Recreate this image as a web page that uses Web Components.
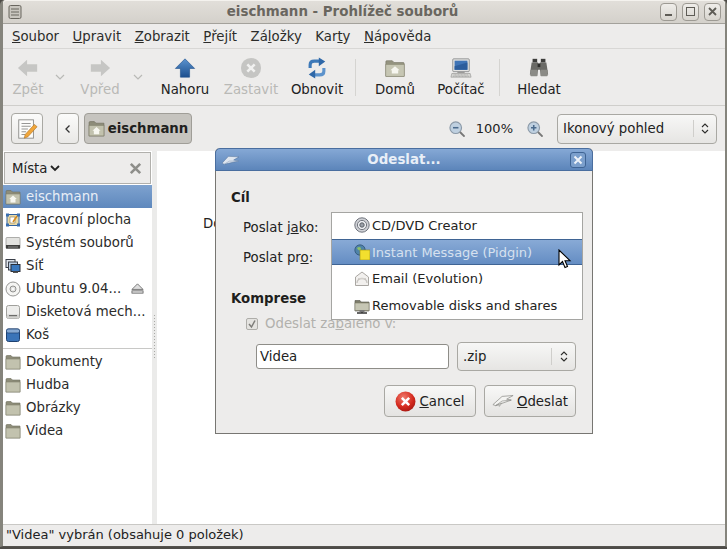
<!DOCTYPE html>
<html>
<head>
<meta charset="utf-8">
<style>
  html, body { margin: 0; height: 100%; background: #4d4b47; overflow: hidden; }
  body { font: 13.3px "DejaVu Sans", sans-serif; color: #222; }
</style>
</head>
<body>
<file-window>
  <title-bar slot="top">eischmann - Prohlížeč souborů</title-bar>
  <menu-bar slot="top">
    <menu-item><u>S</u>oubor</menu-item>
    <menu-item><u>U</u>pravit</menu-item>
    <menu-item><u>Z</u>obrazit</menu-item>
    <menu-item><u>P</u>řejít</menu-item>
    <menu-item>Zá<u>l</u>ožky</menu-item>
    <menu-item>Kar<u>t</u>y</menu-item>
    <menu-item><u>N</u>ápověda</menu-item>
  </menu-bar>
  <tool-bar slot="top"></tool-bar>
  <location-bar slot="top"></location-bar>
  <side-pane slot="side"></side-pane>
  <span slot="main" style="position:absolute;left:46px;top:65px">Do</span>
  <status-bar slot="bottom">"Videa" vybrán (obsahuje 0 položek)</status-bar>
  <send-dialog slot="over"></send-dialog>
</file-window>

<script>
const ICONS = {
  back: `<path d="M1 12 11 3v5h11v8H11v5z" fill="#c6c6c4"/>`,
  forward: `<path d="M23 12 13 3v5H2v8h11v5z" fill="#c6c6c4"/>`,
  up: `<defs><linearGradient id="g" x1="0" y1="0" x2="0" y2="1"><stop offset="0" stop-color="#5b93cf"/><stop offset="1" stop-color="#1c4f8e"/></linearGradient></defs><path d="M12 2 22.500 12.500H17V22H7v-9.500H1.500z" fill="url(#g)" stroke="#24558f" stroke-width=".7"/>`,
  stop: `<circle cx="12" cy="12" r="11" fill="#c5c5c3"/><path d="m8 8 8 8m0-8-8 8" stroke="#f1f1f0" stroke-width="2.800"/>`,
  reload: `<path d="M4.500 12V8.500Q4.500 4.500 9 4.500h6" fill="none" stroke="#3d79b8" stroke-width="3.400"/><path d="M14 .5 21 5l-7 5z" fill="#2f68a8"/><path d="M19.500 12v3.500q0 4-4.500 4H9" fill="none" stroke="#5d93cc" stroke-width="3.400"/><path d="m10 14-7 5 7 4.500z" fill="#2f68a8"/>`,
  home: `<path d="M2 5a1 1 0 0 1 1-1h6l2 2h10a1 1 0 0 1 1 1v14H2z" fill="#94937f" stroke="#6f6e5e" stroke-width=".6"/><rect x="2" y="8" width="20" height="13" fill="#c6c6b3" stroke="#85846f" stroke-width=".6"/><path d="m12 10 5 4.500h-1.500V18h-7v-3.500H7z" fill="#f6f6ef"/>`,
  computer: `<rect x="3" y="2" width="18" height="14" rx="1" fill="#e4e4e2" stroke="#77787a" stroke-width=".8"/><rect x="5" y="4" width="14" height="10" fill="#3f74b6"/><path d="M5 10 19 6v8H5z" fill="#2c5d9c"/><rect x="8" y="16" width="8" height="1.500" fill="#9a9a98"/><path d="M2 18h20l1 4H1z" fill="#d6d6d3" stroke="#8a8a88" stroke-width=".6"/><path d="M4 19.500h16M3.500 21h17" stroke="#8c8c8a" stroke-width=".6" stroke-dasharray="1 .6"/>`,
  search: `<rect x="5" y="2" width="5" height="4" fill="#3d3d3b"/><rect x="14" y="2" width="5" height="4" fill="#3d3d3b"/><path d="M4 6h7v5h2V6h7l2 13h-8l-1-5h-2l-1 5H2z" fill="#6a6a66"/><rect x="2.500" y="14" width="8" height="7" rx="1" fill="#8b8b86"/><rect x="13.500" y="14" width="8" height="7" rx="1" fill="#8b8b86"/><rect x="10.500" y="7" width="3" height="4" fill="#2d2d2b"/>`,
  note: `<rect x="3" y="2" width="16" height="20" fill="#fdfdfb" stroke="#8d8d8a"/><path d="M6 6h10M6 9h10M6 12h7M6 15h5M6 18h4" stroke="#8d8d8a"/><path d="m20 7 3 2.500-10 11-4 1.500 1-4z" fill="#f0a63a" stroke="#a7691a" stroke-width=".6"/>`,
  zoomout: `<circle cx="10" cy="10" r="7.500" fill="#bfd0e0" stroke="#8c9aa8" stroke-width="1.500"/><path d="M6.500 10h7" stroke="#4a6a8c" stroke-width="2"/><path d="m15.500 15.500 6 6" stroke="#777" stroke-width="2.500"/>`,
  zoomin: `<circle cx="10" cy="10" r="7.500" fill="#bfd0e0" stroke="#8c9aa8" stroke-width="1.500"/><path d="M6.500 10h7M10 6.500v7" stroke="#4a6a8c" stroke-width="2"/><path d="m15.500 15.500 6 6" stroke="#777" stroke-width="2.500"/>`,
  folder: `<path d="M1 2.500a1 1 0 0 1 1-1h4L7.500 3H15v12H1z" fill="#8e8d79" stroke="#6f6e5e" stroke-width=".6"/><rect x="1" y="5" width="14" height="10" fill="#c2c2ae" stroke="#83826e" stroke-width=".6"/>`,
  homefolder: `<path d="M1 2.500a1 1 0 0 1 1-1h4L7.500 3H15v12H1z" fill="#8e8d79" stroke="#6f6e5e" stroke-width=".6"/><rect x="1" y="5" width="14" height="10" fill="#c2c2ae" stroke="#83826e" stroke-width=".6"/><path d="m8 6.500 3.800 3.500h-1.300v3.500h-5V10H4.200z" fill="#f7f7f0"/>`,
  desktop: `<rect x="2" y="2.500" width="12" height="11" fill="#e9d9a6" stroke="#2f62a0"/><path d="M5 5h5v6H5z" fill="#fff" stroke="#8a7a50" stroke-width=".6"/><path d="m12 4-4 6" stroke="#d68a1e" stroke-width="1.600"/><rect x="1" y="1.500" width="3" height="3" fill="#3a6fb0"/><rect x="12" y="1.500" width="3" height="3" fill="#3a6fb0"/><rect x="1" y="11.500" width="3" height="3" fill="#3a6fb0"/><rect x="12" y="11.500" width="3" height="3" fill="#3a6fb0"/>`,
  drive: `<rect x="1" y="2.500" width="14" height="11" rx="1" fill="#e3e3e0" stroke="#8f8f8c" stroke-width=".7"/><rect x="1" y="10" width="14" height="3.500" fill="#3f3f3d"/><rect x="3" y="11.500" width="10" height="1" fill="#8c8c8a"/>`,
  network: `<rect x="1" y="1.500" width="9" height="8" fill="#dfe5ec" stroke="#3a3f48"/><rect x="3.500" y="4" width="9" height="8" fill="#bcd0e6" stroke="#3a3f48"/><rect x="6" y="6.500" width="9" height="7" fill="#3a78bd" stroke="#2a2f38"/><rect x="8" y="13.500" width="5" height="1.500" fill="#555"/>`,
  disc: `<circle cx="8" cy="8" r="7" fill="#f5f5f3" stroke="#7c7c7a" stroke-width=".8"/><circle cx="8" cy="8" r="3" fill="#e4e4e2" stroke="#7c7c7a" stroke-width=".8"/><circle cx="8" cy="8" r="1" fill="#fff"/>`,
  eject: `<path d="M7 2 1 8h12z" fill="#dedede" stroke="#555" stroke-width=".8"/><rect x="1" y="9.500" width="12" height="2.500" fill="#dedede" stroke="#555" stroke-width=".8"/>`,
  floppy: `<rect x="1.500" y="1.500" width="13" height="13" rx="2" fill="#ededeb" stroke="#a0a09c"/><path d="M2 10.500h12v3a1 1 0 0 1-1 1H3a1 1 0 0 1-1-1z" fill="#d2d2cf"/><rect x="4" y="11" width="8" height="1.200" fill="#6c6c6a"/>`,
  trash: `<rect x="1.500" y="2" width="13" height="12.500" rx="2" fill="#3a74b8" stroke="#1e4170"/><rect x="1.500" y="2" width="13" height="4" rx="1.500" fill="#86a9d2" stroke="#1e4170" stroke-width=".7"/>`,
  close: `<path d="m3 3 10 10M13 3 3 13" stroke="#8e8e8a" stroke-width="2.800"/>`,
  cd: `<circle cx="8" cy="8" r="7.200" fill="#cfd1d6" stroke="#6f737c"/><circle cx="8" cy="8" r="4.600" fill="#eef0f3" stroke="#73777f"/><circle cx="8" cy="8" r="2.200" fill="#9aa0a8" stroke="#5c6068"/>`,
  pidgin: `<circle cx="6" cy="6" r="5.200" fill="#4f83a8" stroke="#1f3f5f" stroke-width=".6"/><path d="M3 4c2-2 4-1 4 1S4 7 3 4z" fill="#8cc06a"/><rect x="6" y="6" width="10" height="10" fill="#f2df2e" stroke="#9c8f14" stroke-width=".6"/>`,
  mail: `<path d="M1.500 14.500V6L8 1l6.500 5v8.500z" fill="#f2f0ee" stroke="#aaa7a3"/><path d="M3 12c0-6 10-6 10 0" fill="none" stroke="#c6c3bf" stroke-width="1.300"/><path d="M4 7.500h8" stroke="#d2cfcb"/>`,
  share: `<path d="M1 2.500h5l1 1.500h8v9H1z" fill="#7c7b69" stroke="#55544a" stroke-width=".6"/><rect x="1" y="5" width="14" height="7.500" fill="#c6c6b4" stroke="#7f7e6a" stroke-width=".6"/><path d="M8 12.500v2M3 15h10" stroke="#333" stroke-width="1.400"/><rect x="5.500" y="12" width="5" height="2" fill="#777"/>`,
  plane: `<path d="M1 16 11 7l12-1-7 4 5 1L4 17z" fill="#f4f4f2" stroke="#8c8c88" stroke-width=".8"/><path d="m4 17 7-5 10-1" fill="none" stroke="#8c8c88" stroke-width=".7"/><path d="m4 17 3-1 1 2 3-4z" fill="#c9c9c5" stroke="#8c8c88" stroke-width=".5"/>`,
  planew: `<path d="M0 11.500 6 5l10 .5-5 3 4.500 1L2 12.500z" fill="#dfe6ef" stroke="#54749c" stroke-width=".5"/><path d="m2 12.500 5-3 8.500 0" fill="none" stroke="#8fa5c2" stroke-width=".6"/>`,
  cancel: `<defs><radialGradient id="r" cx=".4" cy=".3" r=".8"><stop offset="0" stop-color="#f07a6c"/><stop offset=".6" stop-color="#d42a1e"/><stop offset="1" stop-color="#9c1410"/></radialGradient></defs><circle cx="10" cy="10" r="9.500" fill="url(#r)"/><path d="m6.500 6.500 7 7m0-7-7 7" stroke="#fff" stroke-width="2.400"/>`,
  wmenu: `<rect x="2" y="1.500" width="12" height="13" rx="1.500" fill="#c9c6bf" stroke="#69665f"/><path d="M4 5h8M4 8h8M4 11h8" stroke="#69665f"/>`,
  cursor: `<path d="M1 1v15l3.500-3.500 2.500 6 2.500-1-2.500-5.800H12z" fill="#fff" stroke="#000" stroke-width="1.100"/>`
};
const BOXES = { back: 24, forward: 24, up: 24, stop: 24, reload: 24, home: 24, computer: 24, search: 24, note: 24, zoomout: 22, zoomin: 22, eject: 14, plane: 24, cancel: 20, cursor: 20 };

class AppIcon extends HTMLElement {
  connectedCallback() {
    const name = this.getAttribute('name');
    const size = this.getAttribute('size') || 16;
    const box = BOXES[name] || 16;
    this.attachShadow({ mode: 'open' });
    this.shadowRoot.innerHTML = `
      <style>:host { display: inline-block; width: ${size}px; height: ${size}px; flex: none; line-height: 0; }</style>
      <svg width="${size}" height="${size}" viewBox="0 0 ${box} ${box}">${ICONS[name]}</svg>`;
  }
}

class FileWindow extends HTMLElement {
  connectedCallback() {
    this.attachShadow({ mode: 'open' });
    this.shadowRoot.innerHTML = `
      <style>
        :host { display: flex; flex-direction: column; box-sizing: border-box; width: 727px; height: 547px; background: #edeceb; border-left: 3px solid #85847c; border-right: 2px solid #85847c; border-bottom: 1px solid #55534e; border-radius: 5px 5px 0 0; position: relative; }
        .body { flex: 1; display: flex; min-height: 0; }
        .main { flex: 1; background: #fff; position: relative; overflow: hidden; }
        .handle { width: 5px; background: #ebebea; }
      </style>
      <slot name="top"></slot>
      <div class="body">
        <slot name="side"></slot>
        <div class="handle"></div>
        <div class="main"><slot name="main"></slot></div>
      </div>
      <slot name="bottom"></slot>
      <slot name="over"></slot>`;
  }
}

class TitleBar extends HTMLElement {
  connectedCallback() {
    this.attachShadow({ mode: 'open' });
    this.shadowRoot.innerHTML = `
      <style>
        :host { display: flex; align-items: center; height: 23px; background: linear-gradient(#e2dfda, #d4d1cb); border-bottom: 1px solid #a3a19b; box-shadow: inset 0 1px #f4f2ee; border-radius: 4px 4px 0 0; padding: 0 4px; color: #69665f; font-weight: bold; font-size: 13.4px; }
        .t { flex: 1; text-align: center; padding-left: 2px; }
        .btns { display: flex; gap: 5px; }
        .b { width: 17px; height: 18px; box-sizing: border-box; border: 1px solid #9d9a93; border-radius: 4px; display: flex; align-items: center; justify-content: center; background: linear-gradient(#efedea, #d8d5cf); }
        svg { display: block; }
      </style>
      <app-icon name="wmenu" size="16"></app-icon>
      <div class="t"><slot></slot></div>
      <div class="btns">
        <div class="b"><svg width="11" height="11"><path d="M2 9h7" stroke="#5e5c56" stroke-width="2"/></svg></div>
        <div class="b"><svg width="11" height="11"><rect x="1.500" y="1.500" width="8" height="8" fill="none" stroke="#5e5c56"/></svg></div>
        <div class="b"><svg width="11" height="11"><path d="m2 2 7 7m0-7-7 7" stroke="#5e5c56" stroke-width="1.800"/></svg></div>
      </div>`;
  }
}

class MenuBar extends HTMLElement {
  connectedCallback() {
    this.attachShadow({ mode: 'open' });
    this.shadowRoot.innerHTML = `
      <style>:host { display: flex; gap: 13.500px; align-items: center; height: 24px; padding-left: 9px; border-bottom: 1px solid #d8d7d5; color: #2c2c2a; }</style>
      <slot></slot>`;
  }
}
class MenuItem extends HTMLElement {
  connectedCallback() {
    this.attachShadow({ mode: 'open' });
    this.shadowRoot.innerHTML = `<style>:host { display: block; }</style><slot></slot>`;
  }
}

class ToolButton extends HTMLElement {
  connectedCallback() {
    const w = this.getAttribute('w') || 66;
    this.attachShadow({ mode: 'open' });
    this.shadowRoot.innerHTML = `
      <style>
        :host { display: flex; flex-direction: column; align-items: center; width: ${w}px; flex: none; color: #222; }
        :host([off]) { color: #b9b9b6; }
        .l { line-height: 18px; margin-top: 2px; }
      </style>
      <app-icon name="${this.getAttribute('icon')}" size="22"></app-icon>
      <div class="l"><slot></slot></div>`;
  }
}

class ToolBar extends HTMLElement {
  connectedCallback() {
    this.attachShadow({ mode: 'open' });
    this.shadowRoot.innerHTML = `
      <style>
        :host { display: flex; align-items: flex-start; height: 48px; padding: 8px 0 0 2px; border-bottom: 1px solid #cfcecb; }
        .drop { flex: none; display: flex; justify-content: center; padding-top: 17px; }
        .sep { flex: none; width: 1px; height: 37px; background: #d5d4d1; margin: 2px 6px 0 5px; }
      </style>
      <tool-button icon="back" w="46" off>Zpět</tool-button>
      <div class="drop" style="width:18px"><svg width="10" height="6"><path d="m1 1 4 4 4-4" fill="none" stroke="#b9b9b6" stroke-width="1.200"/></svg></div>
      <tool-button icon="forward" w="62" off>Vpřed</tool-button>
      <div class="drop" style="width:14px;margin-right:7px"><svg width="10" height="6"><path d="m1 1 4 4 4-4" fill="none" stroke="#b9b9b6" stroke-width="1.200"/></svg></div>
      <tool-button icon="up">Nahoru</tool-button>
      <tool-button icon="stop" off>Zastavit</tool-button>
      <tool-button icon="reload">Obnovit</tool-button>
      <div class="sep"></div>
      <tool-button icon="home">Domů</tool-button>
      <tool-button icon="computer">Počítač</tool-button>
      <div class="sep"></div>
      <tool-button icon="search">Hledat</tool-button>`;
  }
}

class LocationBar extends HTMLElement {
  connectedCallback() {
    this.attachShadow({ mode: 'open' });
    this.shadowRoot.innerHTML = `
      <style>
        :host { display: flex; align-items: center; height: 45px; padding: 0 8px; box-sizing: border-box; }
        .btn { box-sizing: border-box; height: 31px; border: 1px solid #a9a8a3; border-radius: 4px; background: linear-gradient(#fbfbfa, #e9e8e6); display: flex; align-items: center; justify-content: center; }
        .note { width: 32px; margin-right: 14px; }
        .prev { width: 22px; margin-right: 5px; }
        .cur { width: 108px; background: #c6c4bf; font-weight: bold; gap: 3px; color: #1f1f1d; border-color: #a09e98; }
        .zoom { margin-left: auto; display: flex; align-items: center; }
        .pct { margin: 0 13px 0 14px; font-size: 13px; }
        .combo { margin-left: 14px; }
      </style>
      <div class="btn note"><app-icon name="note" size="22"></app-icon></div>
      <div class="btn prev"><svg width="8" height="10"><path d="M5.500 1.500 2 5l3.500 3.500" fill="none" stroke="#333" stroke-width="1.300"/></svg></div>
      <div class="btn cur"><app-icon name="homefolder" size="17"></app-icon>eischmann</div>
      <div class="zoom">
        <app-icon name="zoomout" size="17" style="margin-right:-3px"></app-icon>
        <span class="pct">100%</span>
        <app-icon name="zoomin" size="17"></app-icon>
        <combo-box class="combo" style="width:160px;height:30px" sep="22">Ikonový pohled</combo-box>
      </div>`;
  }
}

class ComboBox extends HTMLElement {
  connectedCallback() {
    const sep = this.getAttribute('sep') || 22;
    this.attachShadow({ mode: 'open' });
    this.shadowRoot.innerHTML = `
      <style>
        :host { display: flex; align-items: center; box-sizing: border-box; border: 1px solid #a9a8a3; border-radius: 4px; background: linear-gradient(#f7f7f6, #e6e5e3); padding-left: 5px; flex: none; }
        .t { flex: 1; }
        .a { width: ${sep}px; height: 60%; border-left: 1px solid #cfcecb; display: flex; align-items: center; justify-content: center; }
      </style>
      <span class="t"><slot></slot></span>
      <span class="a"><svg width="8" height="13"><path d="M1 5l3-3 3 3M1 8l3 3 3-3" fill="none" stroke="#2e2e2c" stroke-width="1.100"/></svg></span>`;
  }
}

class PlaceRow extends HTMLElement {
  connectedCallback() {
    const eject = this.hasAttribute('eject') ? `<app-icon class="ej" name="eject" size="13"></app-icon>` : '';
    this.attachShadow({ mode: 'open' });
    this.shadowRoot.innerHTML = `
      <style>
        :host { display: flex; align-items: center; gap: 5px; height: 23px; padding: 0 4px 0 2px; white-space: nowrap; color: #2b2b2a; }
        :host([selected]) { background: linear-gradient(#7ea2cf, #5e88bd); color: #e8eef6; }
        .ej { margin-left: auto; margin-right: 4px; }
      </style>
      <app-icon name="${this.getAttribute('icon')}" size="16"></app-icon>
      <slot></slot>${eject}`;
  }
}

class SidePane extends HTMLElement {
  connectedCallback() {
    this.attachShadow({ mode: 'open' });
    this.shadowRoot.innerHTML = `
      <style>
        :host { display: flex; flex-direction: column; width: 149px; background: #fff; box-sizing: border-box; position: relative; }
        .head { display: flex; align-items: center; height: 32px; box-sizing: border-box; background: #edeceb; border: 1px solid #b1b0ac; margin: 1px; padding: 0 7px; gap: 3px; }
        .x { margin-left: auto; }
        hr { border: 0; height: 1px; background: #c8c8c6; margin: 2px 0 1px 0; }
        .dots { position: absolute; left: 150px; top: 163px; width: 5px; height: 46px; background-image: radial-gradient(#a9a9a6 .8px, transparent .9px); background-size: 3px 3px; }
      </style>
      <div class="head">Místa
        <svg width="10" height="7"><path d="m1 1 4 4 4-4" fill="none" stroke="#222" stroke-width="1.800"/></svg>
        <app-icon class="x" name="close" size="15"></app-icon>
      </div>
      <place-row icon="homefolder" selected>eischmann</place-row>
      <place-row icon="desktop">Pracovní plocha</place-row>
      <place-row icon="drive">Systém souborů</place-row>
      <place-row icon="network">Síť</place-row>
      <place-row icon="disc" eject>Ubuntu 9.04...</place-row>
      <place-row icon="floppy">Disketová mech...</place-row>
      <place-row icon="trash">Koš</place-row>
      <hr>
      <place-row icon="folder">Dokumenty</place-row>
      <place-row icon="folder">Hudba</place-row>
      <place-row icon="folder">Obrázky</place-row>
      <place-row icon="folder">Videa</place-row>
      <div class="dots"></div>`;
  }
}

class StatusBar extends HTMLElement {
  connectedCallback() {
    this.attachShadow({ mode: 'open' });
    this.shadowRoot.innerHTML = `
      <style>:host { display: flex; align-items: center; height: 22px; padding: 0 0 2px 3px; box-sizing: border-box; border-top: 1px solid #c9c8c5; font-size: 13px; }</style>
      <slot></slot>`;
  }
}

class PushButton extends HTMLElement {
  connectedCallback() {
    this.attachShadow({ mode: 'open' });
    this.shadowRoot.innerHTML = `
      <style>
        :host { display: flex; align-items: center; justify-content: center; gap: 3px; box-sizing: border-box; width: 92px; height: 32px; border: 1px solid #a9a8a3; border-radius: 4px; background: linear-gradient(#f8f8f7, #e4e3e1); }
      </style>
      <app-icon name="${this.getAttribute('icon')}" size="${this.getAttribute('size') || 22}"></app-icon>
      <span><slot></slot></span>`;
  }
}

class SendDialog extends HTMLElement {
  connectedCallback() {
    this.attachShadow({ mode: 'open' });
    this.shadowRoot.innerHTML = `
      <style>
        :host { position: absolute; left: 212px; top: 148px; width: 378px; height: 286px; box-sizing: border-box; background: #edeceb; border: 1px solid #777672; border-top: 0; border-radius: 5px 5px 0 0; display: flex; flex-direction: column; font-size: 13.3px; }
        .title { display: flex; align-items: center; height: 23px; flex: none; background: linear-gradient(#85a8d5, #5c85ba); border-radius: 5px 5px 0 0; border: 1px solid #4a6e9f; margin: 0 -1px; padding: 0 6px; color: #e9eff7; font-weight: bold; font-size: 13.4px; box-sizing: border-box; }
        .title .t { flex: 1; text-align: center; padding-right: 1px; }
        .cl { width: 16px; height: 16px; box-sizing: border-box; border: 1px solid #3f6494; border-radius: 3px; background: #7b9fcc; display: flex; align-items: center; justify-content: center; }
        .content { padding: 19px 16px 0 15px; position: relative; flex: 1; }
        b { display: block; color: #1e1e1c; line-height: 16px; }
        .row { margin: 0 0 0 12px; line-height: 16px; }
        .comp { display: flex; align-items: center; gap: 7px; margin: 9px 0 0 15px; color: #b2b1ad; line-height: 16px; }
        .box { width: 12px; height: 12px; box-sizing: border-box; border: 1px solid #aeada9; background: #e4e3e0; border-radius: 2px; display: flex; }
        .fields { display: flex; align-items: center; gap: 8px; margin: 10px 0 0 25px; }
        .entry { box-sizing: border-box; width: 193px; height: 25px; border: 1px solid #8e8d88; border-radius: 3px; background: #fff; display: flex; align-items: center; padding-left: 3px; }
        .actions { display: flex; justify-content: flex-end; gap: 8px; margin-top: 14px; }
      </style>
      <div class="title">
        <app-icon name="planew" size="17"></app-icon>
        <span class="t">Odeslat...</span>
        <div class="cl"><svg width="10" height="10"><path d="m1.500 1.500 7 7m0-7-7 7" stroke="#eef3f9" stroke-width="2"/></svg></div>
      </div>
      <div class="content">
        <b>Cíl</b>
        <div class="row" style="margin-top:14px">Poslat j<u>a</u>ko:</div>
        <div class="row" style="margin-top:14px">Poslat pr<u>o</u>:</div>
        <b style="margin-top:25px">Komprese</b>
        <div class="comp">
          <span class="box"><svg width="10" height="10"><path d="m2 5 2.500 3L8 1.500" fill="none" stroke="#7d7c78" stroke-width="1.500"/></svg></span>
          <span>Odeslat za<u>b</u>aleno v:</span>
        </div>
        <div class="fields">
          <div class="entry">Videa</div>
          <combo-box style="width:119px;height:29px" sep="23">.zip</combo-box>
        </div>
        <div class="actions">
          <push-button icon="cancel" size="21"><u>C</u>ancel</push-button>
          <push-button icon="plane" size="22"><u>O</u>deslat</push-button>
        </div>
        <send-menu></send-menu>
      </div>`;
  }
}

class SendMenu extends HTMLElement {
  connectedCallback() {
    this.attachShadow({ mode: 'open' });
    this.shadowRoot.innerHTML = `
      <style>
        :host { position: absolute; left: 115px; top: 41px; width: 252px; height: 108px; box-sizing: border-box; background: #fff; border: 1px solid #a5a5a2; display: flex; flex-direction: column; white-space: nowrap; color: #232321; font-size: 13px; }
        .i { display: flex; align-items: center; gap: 2px; height: 27px; padding-left: 22px; flex: none; box-sizing: border-box; }
        .f { height: 26px; padding-bottom: 2px; }
        .s { height: 26px; background: linear-gradient(#88aad6, #648dc3); color: #d6e1ef; border-top: 1px solid #3f6494; border-bottom: 1px solid #3f6494; position: relative; }
        .c { position: absolute; left: 226px; top: 9px; }
      </style>
      <div class="i f"><app-icon name="cd" size="16"></app-icon>CD/DVD Creator</div>
      <div class="i s"><app-icon name="pidgin" size="16"></app-icon>Instant Message (Pidgin)<app-icon class="c" name="cursor" size="20"></app-icon></div>
      <div class="i"><app-icon name="mail" size="16"></app-icon>Email (Evolution)</div>
      <div class="i"><app-icon name="share" size="16"></app-icon>Removable disks and shares</div>`;
  }
}

customElements.define('app-icon', AppIcon);
customElements.define('file-window', FileWindow);
customElements.define('title-bar', TitleBar);
customElements.define('menu-bar', MenuBar);
customElements.define('menu-item', MenuItem);
customElements.define('tool-button', ToolButton);
customElements.define('tool-bar', ToolBar);
customElements.define('location-bar', LocationBar);
customElements.define('combo-box', ComboBox);
customElements.define('place-row', PlaceRow);
customElements.define('side-pane', SidePane);
customElements.define('status-bar', StatusBar);
customElements.define('push-button', PushButton);
customElements.define('send-dialog', SendDialog);
customElements.define('send-menu', SendMenu);
</script>
</body>
</html>
